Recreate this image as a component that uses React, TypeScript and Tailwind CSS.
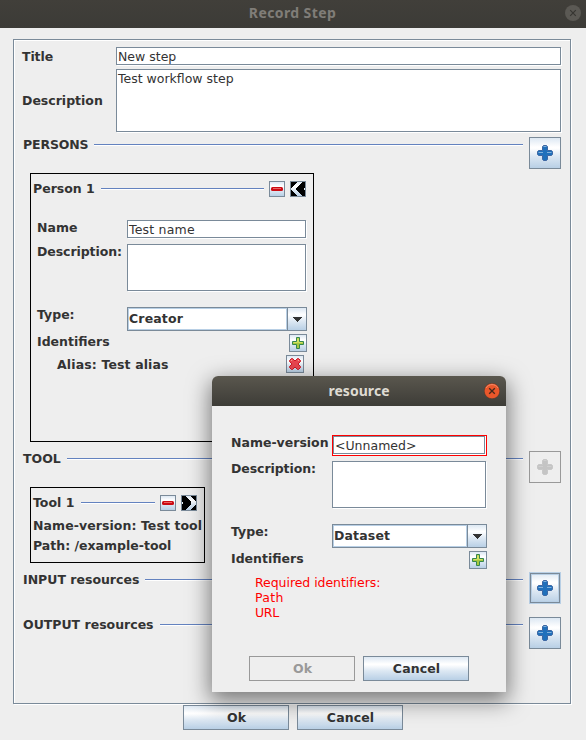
import React from "react";

const bevel = "border border-[#7a8a99] shadow-[1px_1px_0_#fff,inset_1px_1px_0_#fff]";
const steelFill = "bg-[linear-gradient(180deg,#dde8f3_0%,#ffffff_30%,#ffffff_34%,#dde8f3_60%,#b8cfe5_100%)]";
const steel = `border border-[#7a8a99] ${steelFill}`;

function Label({ children, className = "" }: { children: React.ReactNode; className?: string }) {
  return (
    <div className={`h-[15px] shrink-0 whitespace-nowrap leading-[15px] font-bold ${className}`}>{children}</div>
  );
}

function Field({ children, className = "" }: { children?: React.ReactNode; className?: string }) {
  return (
    <div className={`shrink-0 bg-white pt-px pl-px leading-[15px] whitespace-nowrap ${bevel} ${className}`}>
      {children}
    </div>
  );
}

function Rule({ className = "" }: { className?: string }) {
  return <div className={`h-0.5 border-t border-b border-t-[#6382bf] border-b-white ${className}`} />;
}

function BigPlus({ disabled = false, focused = false }: { disabled?: boolean; focused?: boolean }) {
  const edge = disabled ? "#c8c8c8" : "#3f67a2";
  const fill = disabled ? "#c4c4c4" : "#2070bb";
  const shine = disabled ? "#cfcfcf" : "#7fb0dc";
  const frame = disabled
    ? "border border-[#999999]"
    : focused
      ? `border border-[#b8cfe5] ${steelFill}`
      : steel;
  return (
    <div className={`flex size-8 shrink-0 ${frame}`}>
      <div
        className={`flex flex-1 items-center justify-center ${
          focused ? "border border-[#7a8a99] shadow-[inset_0_0_0_1px_#b8cfe5]" : ""
        }`}
      >
        <svg width="16" height="16" viewBox="0 0 16 16">
          <path
            d="M6.500.5h3l1 1v4h4l1 1v3l-1 1h-4v4l-1 1h-3l-1-1v-4h-4l-1-1v-3l1-1h4v-4z"
            fill={fill}
            stroke={edge}
          />
          <path d="M1.500 7.500h4.500M10 7.500h4.500M6.500 1.500h3" stroke={shine} fill="none" />
        </svg>
      </div>
    </div>
  );
}

function Minus() {
  return (
    <div className={`flex size-4 shrink-0 items-center justify-center ${steel}`}>
      <svg width="12" height="4" viewBox="0 0 12 4">
        <rect width="12" height="4" rx="1.500" fill="#cc0a12" />
        <path d="M2 1.500h8" stroke="#e86464" />
      </svg>
    </div>
  );
}

function Chevron({ right = false }: { right?: boolean }) {
  return (
    <div className={`size-4 shrink-0 ${steel}`}>
      <svg width="14" height="14" viewBox="0 0 14 14" shapeRendering="crispEdges" className={right ? "-scale-x-100" : ""}>
        <path d="M0 0h6L0 6zM0 8l6 6H0zM11 0h3v6h-1v2h1v6h-3L5 8V6z" fill="#000" />
      </svg>
    </div>
  );
}

function GreenPlus() {
  return (
    <div className={`flex size-[18px] shrink-0 items-center justify-center ${steel}`}>
      <svg width="12" height="12" viewBox="0 0 12 12">
        <path d="M4.500.5h3v4h4v3h-4v4h-3v-4h-4v-3h4z" fill="#a6c840" stroke="#35864f" />
        <path d="M5.500 1.500v4h-4M6.500 1.500v4h4" fill="none" stroke="#d3e262" />
      </svg>
    </div>
  );
}

function RedCross() {
  return (
    <div className={`flex size-[18px] shrink-0 items-center justify-center ${steel}`}>
      <svg width="12" height="12" viewBox="0 0 12 12">
        <path
          d="M2.500.5h1L6 3 8.500.5h1l2 2v1L9 6l2.500 2.500v1l-2 2h-1L6 9l-2.500 2.500h-1l-2-2v-1L3 6 .5 3.500v-1z"
          fill="#ea4650"
          stroke="#cc1824"
          strokeLinejoin="round"
        />
        <path d="M2 2.500h1.200M8.800 2.500H10" fill="none" stroke="#f5a090" />
      </svg>
    </div>
  );
}

function Combo({ children, className = "" }: { children: React.ReactNode; className?: string }) {
  return (
    <div className={`flex h-6 shrink-0 border border-[#7a8a99] bg-white ${className}`}>
      <div className="flex-1 border border-[#b8cfe5] leading-[20px] font-bold tracking-[0.15px]">{children}</div>
      <div className="-my-px -mr-px flex w-5 items-center justify-center border border-[#7a8a99] bg-[linear-gradient(180deg,#dde8f3_0%,#ffffff_30%,#dde8f3_60%,#b8cfe5_100%)]">
        <svg width="10" height="5" viewBox="0 0 10 5" shapeRendering="crispEdges">
          <path d="M0 0h10L5 5z" fill="#333" />
        </svg>
      </div>
    </div>
  );
}

function Button({ children, disabled = false }: { children: React.ReactNode; disabled?: boolean }) {
  return (
    <div
      className={`h-[25px] w-[106px] pl-px text-center leading-[23px] font-bold tracking-[0.1px] ${
        disabled ? "border border-[#999999] text-[#999999]" : steel
      }`}
    >
      {children}
    </div>
  );
}

function Section({
  title,
  width,
  className = "",
  disabled,
  focused,
}: {
  title: string;
  width: string;
  className?: string;
  disabled?: boolean;
  focused?: boolean;
}) {
  return (
    <div className={`flex h-8 pr-[9px] pl-[9px] ${className}`}>
      <Label className={width}>{title}</Label>
      <Rule className="mt-[7px] mr-1.5 flex-1" />
      <BigPlus disabled={disabled} focused={focused} />
    </div>
  );
}

function ResourceDialog() {
  return (
    <div className="absolute top-[376px] left-[212px] h-[316px] w-[294px] rounded-t-md bg-[#eeeeee] shadow-[0_7px_22px_2px_rgba(0,0,0,0.5)]">
      <div className="relative h-[30px] rounded-t-md bg-[linear-gradient(180deg,#5a574e,#3d3c37)] text-center font-['Noto_Sans'] text-[14px] leading-[30px] font-bold tracking-[0.05px] text-[#dfdbd2]">
        resource
        <svg className="absolute top-[7px] right-[6px]" width="16" height="16" viewBox="0 0 16 16">
          <circle cx="8" cy="8" r="7.800" fill="#e9572b" stroke="#37342e" strokeWidth=".5" />
          <path d="M2 5a7 7 0 0 1 12 0" fill="none" stroke="#f48a68" />
          <path d="M5.200 5.200l5.600 5.600M10.800 5.200l-5.600 5.600" stroke="#43281c" strokeWidth="1.300" />
        </svg>
      </div>
      <div className="pt-[29px] pl-[19px]">
        <div className="flex h-[26px]">
          <Label className="w-[101px]">Name-version</Label>
          <div className="h-[21px] w-[155px] border border-[#ff0000] bg-white">
            <Field className="h-[18px] w-[152px]">&lt;Unnamed&gt;</Field>
          </div>
        </div>
        <div className="flex h-[63px]">
          <Label className="w-[101px] tracking-[-0.08px]">Description:</Label>
          <Field className="h-[47px] w-[154px]" />
        </div>
        <div className="flex h-[27px]">
          <Label className="w-[101px]">Type:</Label>
          <Combo className="w-[155px]">Dataset</Combo>
        </div>
        <div className="flex h-[24px]">
          <Label className="w-[238px]">Identifiers</Label>
          <GreenPlus />
        </div>
        <div className="h-[81px] pl-6 leading-[15px] tracking-[-0.05px] text-[#ff0000]">
          <div>Required identifiers:</div>
          <div className="tracking-[0.3px]">Path</div>
          <div className="tracking-[-0.3px]">URL</div>
        </div>
        <div className="flex gap-2 pl-[18px]">
          <Button disabled>Ok</Button>
          <Button>Cancel</Button>
        </div>
      </div>
    </div>
  );
}

export default function App() {
  return (
    <div className="relative h-[740px] w-[586px] overflow-hidden bg-[#eeeeee] font-['DejaVu_Sans',sans-serif] text-[12.5px] text-[#333333]">
      <div className="relative h-7 bg-[linear-gradient(180deg,#413f3a,#3c3b37)] pr-px text-center font-['Noto_Sans'] text-[14px] leading-[26px] font-bold tracking-[0.4px] text-[#807d78]">
        Record Step
        <svg className="absolute top-[5px] right-[5px]" width="16" height="16" viewBox="0 0 16 16">
          <circle cx="8" cy="8" r="8" fill="#5b5954" />
          <path d="M5.200 5.200l5.600 5.600M10.800 5.200l-5.600 5.600" stroke="#373632" strokeWidth="1.200" />
        </svg>
      </div>

      <div className={`mt-[11px] ml-[13px] h-[665px] w-[558px] pt-[7px] ${bevel}`}>
        <div className="flex h-[22px] pl-2">
          <Label className="mt-0.5 w-[94px] tracking-[-0.1px]">Title</Label>
          <Field className="h-[18px] w-[445px]">New step</Field>
        </div>
        <div className="flex h-[68px] pl-2">
          <Label className="mt-6 w-[94px]">Description</Label>
          <Field className="h-[63px] w-[445px]">Test workflow step</Field>
        </div>

        <Section title="PERSONS" width="w-[71px] tracking-[-0.15px]" />
        <div className="mt-1 ml-4 h-[269px] w-[284px] border border-black pt-[7px]">
          <div className="flex h-[39px] pl-0.5">
            <Label className="w-[68px]">Person 1</Label>
            <Rule className="mt-[7px] mr-[5px] w-[163px]" />
            <Minus />
            <div className="w-[5px]" />
            <Chevron />
          </div>
          <div className="flex h-6 pl-1.5">
            <Label className="w-[90px]">Name</Label>
            <Field className="h-[18px] w-[179px] tracking-[0.2px]">Test name</Field>
          </div>
          <div className="flex h-[63px] pl-1.5">
            <Label className="w-[90px] tracking-[-0.08px]">Description:</Label>
            <Field className="h-[47px] w-[179px]" />
          </div>
          <div className="flex h-[27px] pl-1.5">
            <Label className="w-[90px]">Type:</Label>
            <Combo className="w-[180px]">Creator</Combo>
          </div>
          <div className="flex h-[21px] pl-1.5">
            <Label className="w-[252px]">Identifiers</Label>
            <GreenPlus />
          </div>
          <div className="flex pl-[26px]">
            <Label className="mt-0.5 w-[229px] tracking-[0.13px]">Alias: Test alias</Label>
            <RedCross />
          </div>
        </div>

        <Section title="TOOL" width="w-[44px]" className="mt-[9px]" disabled />
        <div className="mt-1 ml-4 h-[76px] w-[175px] border border-black pt-[7px] pl-0.5">
          <div className="flex h-[23px]">
            <Label className="w-12">Tool 1</Label>
            <Rule className="mt-[7px] mr-[5px] w-[74px]" />
            <Minus />
            <div className="w-[5px]" />
            <Chevron right />
          </div>
          <Label className="tracking-[0.07px]">Name-version: Test tool</Label>
          <Label className="mt-[5px]">Path: /example-tool</Label>
        </div>

        <Section title="INPUT resources" width="w-[122px]" className="mt-[9px]" focused />
        <Section title="OUTPUT resources" width="w-[137px]" className="mt-[13px]" />
      </div>

      <div className="mt-px flex gap-2 pl-[183px]">
        <Button>Ok</Button>
        <Button>Cancel</Button>
      </div>

      <ResourceDialog />
    </div>
  );
}
